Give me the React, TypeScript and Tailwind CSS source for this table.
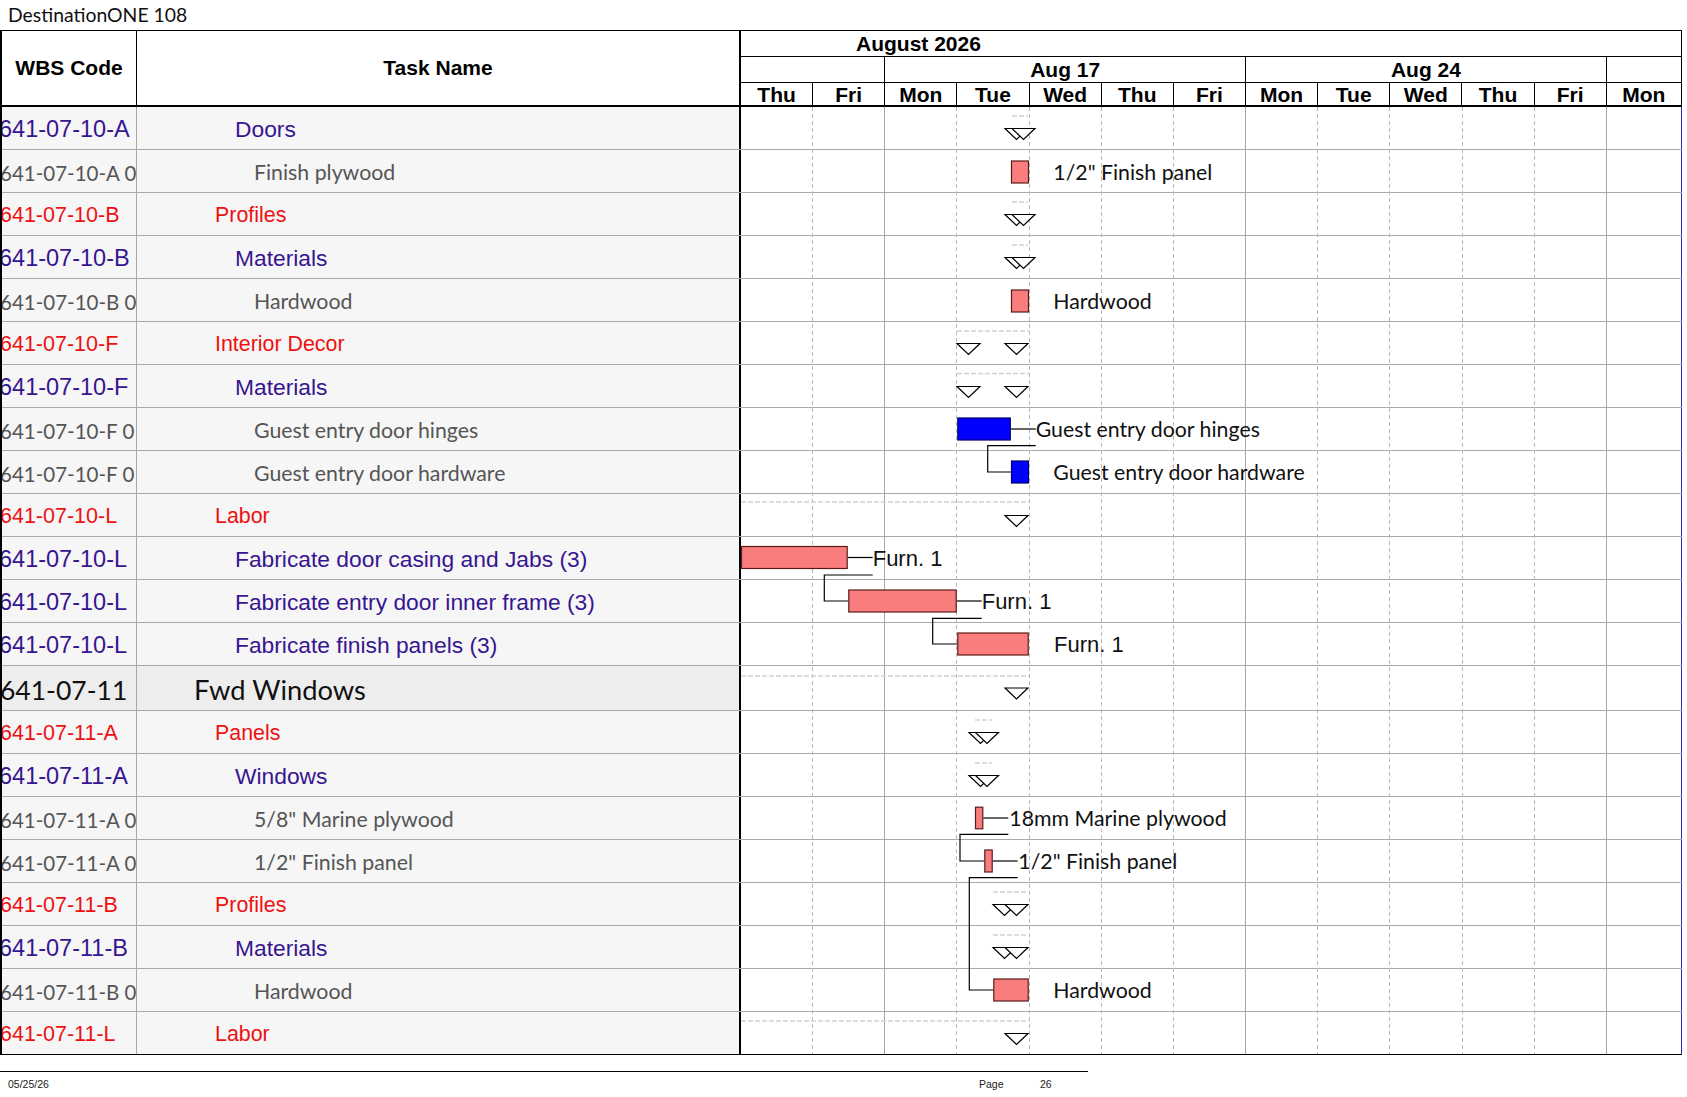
import React from 'react'

type Kind = 'purple' | 'gray' | 'red' | 'top'

const rows: [string, string, Kind][] = [
  ['641-07-10-A', 'Doors', 'purple'],
  ['641-07-10-A 0', 'Finish plywood', 'gray'],
  ['641-07-10-B', 'Profiles', 'red'],
  ['641-07-10-B', 'Materials', 'purple'],
  ['641-07-10-B 0', 'Hardwood', 'gray'],
  ['641-07-10-F', 'Interior Decor', 'red'],
  ['641-07-10-F', 'Materials', 'purple'],
  ['641-07-10-F 0', 'Guest entry door hinges', 'gray'],
  ['641-07-10-F 0', 'Guest entry door hardware', 'gray'],
  ['641-07-10-L', 'Labor', 'red'],
  ['641-07-10-L', 'Fabricate door casing and Jabs (3)', 'purple'],
  ['641-07-10-L', 'Fabricate entry door inner frame (3)', 'purple'],
  ['641-07-10-L', 'Fabricate finish panels (3)', 'purple'],
  ['641-07-11', 'Fwd Windows', 'top'],
  ['641-07-11-A', 'Panels', 'red'],
  ['641-07-11-A', 'Windows', 'purple'],
  ['641-07-11-A 0', '5/8" Marine plywood', 'gray'],
  ['641-07-11-A 0', '1/2" Finish panel', 'gray'],
  ['641-07-11-B', 'Profiles', 'red'],
  ['641-07-11-B', 'Materials', 'purple'],
  ['641-07-11-B 0', 'Hardwood', 'gray'],
  ['641-07-11-L', 'Labor', 'red'],
]

const days = ['Thu', 'Fri', 'Mon', 'Tue', 'Wed', 'Thu', 'Fri', 'Mon', 'Tue', 'Wed', 'Thu', 'Fri', 'Mon']

const ARIAL = "font-['Liberation_Sans',Arial,sans-serif]"
const CALIBRI = "font-['Lato','Liberation_Sans',sans-serif]"

const wbsClass: Record<Kind, string> = {
  purple: `${ARIAL} text-[23.5px] text-[#371590] -ml-[3px] translate-y-[2px]`,
  red: `${ARIAL} text-[21.5px] text-[#ee1111] -ml-[2px] translate-y-[2px]`,
  gray: `${CALIBRI} text-[20.5px] text-[#555555] -ml-[2px] translate-y-[2px]`,
  top: `${CALIBRI} text-[26.5px] text-[#111111] -ml-[2px] translate-y-[2px]`,
}

const taskClass: Record<Kind, string> = {
  purple: `${ARIAL} text-[22.8px] text-[#371590] pl-[98px] translate-y-[0.5px]`,
  red: `${ARIAL} text-[21.4px] text-[#ee1111] pl-[78px] translate-y-[2px]`,
  gray: `${CALIBRI} text-[21.3px] text-[#555555] pl-[117px] translate-y-[2px]`,
  top: `${CALIBRI} text-[27.3px] text-[#111111] pl-[57px] translate-y-[2px]`,
}

const D = 72.15
const rowTop = (r: number) => (r <= 13 ? 107 + 43 * r : 711 + 43 * (r - 14))

// summary dashes: [x1, x2, y]
const dashes: [number, number, number][] = [
  [1012, 1028, 116],
  [1012, 1028, 202],
  [1012, 1028, 245],
  [957, 1029, 331],
  [957, 1029, 373.5],
  [741, 1029, 502],
  [741, 1029, 676],
  [975, 992, 720],
  [975, 992, 763],
  [993, 1028, 892],
  [993, 1028, 935],
  [741, 1029, 1021],
]

// milestone triangles: [left, top]
const tris: [number, number][] = [
  [1005, rowTop(0) + 21.5], [1012, rowTop(0) + 21.5],
  [1005, rowTop(2) + 21.5], [1012, rowTop(2) + 21.5],
  [1005, rowTop(3) + 21.5], [1012, rowTop(3) + 21.5],
  [957, rowTop(5) + 21.5], [1005, rowTop(5) + 21.5],
  [957, rowTop(6) + 21.5], [1005, rowTop(6) + 21.5],
  [1005, rowTop(9) + 21.5],
  [1005, rowTop(13) + 22],
  [969, rowTop(14) + 21.5], [975.5, rowTop(14) + 21.5],
  [969, rowTop(15) + 21.5], [975.5, rowTop(15) + 21.5],
  [993, rowTop(18) + 21.5], [1005, rowTop(18) + 21.5],
  [993, rowTop(19) + 21.5], [1005, rowTop(19) + 21.5],
  [1005, rowTop(21) + 21.5],
]

// bars: [x, y, w, h, blue]
const bars: [number, number, number, number, boolean][] = [
  [1011, 160.5, 18, 23, false],
  [1011, 289.5, 18, 23, false],
  [957.3, 417.5, 53.5, 23, true],
  [1011, 460.5, 18, 23, true],
  [741, 546, 106.7, 23, false],
  [848.3, 589.5, 108.4, 23, false],
  [957.3, 632.5, 71.4, 23, false],
  [975, 806.7, 8.3, 22.6, false],
  [984.3, 849.5, 8.4, 23, false],
  [993.3, 978.5, 35.4, 23, false],
]

const links: number[][][] = [
  [[1011, 429], [1035.7, 429]],
  [[1035.7, 445.7], [987.7, 445.7], [987.7, 472], [1011, 472]],
  [[847.7, 557.5], [872.7, 557.5]],
  [[872.7, 575], [824.3, 575], [824.3, 601], [848.3, 601]],
  [[956.7, 601], [981.7, 601]],
  [[981.7, 618.3], [932.7, 618.3], [932.7, 644], [957.3, 644]],
  [[983.3, 818], [1008.3, 818]],
  [[1008.3, 834.3], [960, 834.3], [960, 861], [984.3, 861]],
  [[992.7, 861], [1017.7, 861]],
  [[1017.7, 877.7], [969.3, 877.7], [969.3, 990], [993.3, 990]],
]

// labels: [x, centerY, text, arial]
const labels: [number, number, string, boolean][] = [
  [1053.3, 172, '1/2" Finish panel', false],
  [1053.3, 301, 'Hardwood', false],
  [1035.7, 429, 'Guest entry door hinges', false],
  [1053.3, 472, 'Guest entry door hardware', false],
  [872.7, 557.5, 'Furn. 1', true],
  [981.7, 601, 'Furn. 1', true],
  [1054, 644, 'Furn. 1', true],
  [1009.3, 818, '18mm Marine plywood', false],
  [1018.3, 861, '1/2" Finish panel', false],
  [1053.3, 990, 'Hardwood', false],
]

function ChartOverlay() {
  // the body sits inside the table's 2px left border, so 739 here is x=741 on the page
  return (
    <div className="pointer-events-none absolute left-[739px] top-0 h-[948px] w-[940px]">
      <svg width={940} height={948} viewBox="741 107 940 948" className="absolute left-0 top-0">
        {Array.from({ length: 12 }, (_, i) => {
          const x = Math.round(741 + (i + 1) * D) - 0.5
          const solid = i === 1 || i === 6 || i === 11
          return (
            <line
              key={i}
              x1={x}
              x2={x}
              y1={107}
              y2={1054}
              stroke={solid ? '#a8a8a8' : '#b8b8b8'}
              strokeWidth={1}
              strokeDasharray={solid ? undefined : '4 3'}
              shapeRendering="crispEdges"
            />
          )
        })}
        {dashes.map(([a, b, y], i) => (
          <line
            key={i}
            x1={a}
            x2={b}
            y1={y}
            y2={y}
            stroke="#d2d2d2"
            strokeWidth={1.5}
            strokeDasharray="5 2"
          />
        ))}
        {tris.map(([l, t], i) => (
          <polygon
            key={i}
            points={`${l},${t} ${l + 23},${t} ${l + 11.5},${t + 11}`}
            fill="white"
            stroke="black"
            strokeWidth={1.2}
          />
        ))}
        {links.map((pts, i) => (
          <polyline
            key={i}
            points={pts.map((p) => p.join(',')).join(' ')}
            fill="none"
            stroke="black"
            strokeWidth={1.2}
          />
        ))}
        {bars.map(([x, y, w, h, blue], i) => (
          <rect
            key={i}
            x={x + 0.5}
            y={y + 0.5}
            width={w - 1}
            height={h - 1}
            fill={blue ? '#0000ff' : '#fa7d7d'}
            stroke={blue ? '#00006e' : '#5a1a1a'}
            strokeWidth={1.2}
          />
        ))}
      </svg>
      {labels.map(([x, y, text, arial], i) => (
        <span
          key={i}
          className={`absolute -translate-y-1/2 whitespace-nowrap leading-none text-[#111111] ${
            arial ? `${ARIAL} text-[22px]` : `${CALIBRI} text-[21.3px]`
          }`}
          style={{ left: x - 741, top: y - 106 }}
        >
          {text}
        </span>
      ))}
    </div>
  )
}

export default function App() {
  return (
    <div className={`relative h-[1097px] w-[1687px] overflow-hidden bg-white ${ARIAL}`}>
      <div className={`flex h-[30px] items-center pl-[8px] text-[19.4px] text-[#111111] ${CALIBRI}`}>
        DestinationONE 108
      </div>

      <div className="w-[1682px] border-l-2 border-black">
        {/* header */}
        <div className="flex h-[77px] border-b-2 border-t border-black text-[21px] font-bold text-black">
          <div className="flex w-[135px] items-center justify-center border-r border-black">WBS Code</div>
          <div className="flex w-[604px] items-center justify-center border-r-2 border-black">Task Name</div>
          <div className="flex w-[941px] flex-col border-r border-black">
            <div className="flex h-[26px] items-center border-b border-black pl-[115px] leading-none">
              August 2026
            </div>
            <div className="grid h-[26px] grid-cols-[144.3px_360.75px_360.75px_1fr] border-b border-black leading-none">
              <div className="border-r border-black" />
              <div className="flex items-center justify-center border-r border-black">Aug 17</div>
              <div className="flex items-center justify-center border-r border-black">Aug 24</div>
              <div />
            </div>
            <div className="grid h-[22px] grid-cols-[repeat(12,72.15px)_1fr] leading-none">
              {days.map((d, i) => (
                <div
                  key={i}
                  className={`flex items-center justify-center ${i < 12 ? 'border-r border-black' : ''}`}
                >
                  {d}
                </div>
              ))}
            </div>
          </div>
        </div>

        {/* body */}
        <div className="relative">
          {rows.map(([code, name, kind], i) => {
            const last = i === rows.length - 1
            const bg = kind === 'top' ? 'bg-[#ededed]' : 'bg-[#f6f6f6]'
            return (
              <div
                key={i}
                className={`flex ${kind === 'top' ? 'h-[45px]' : 'h-[43px]'} border-b ${
                  last ? 'border-black' : 'border-[#a9a9a9]'
                }`}
              >
                <div
                  className={`flex w-[135px] items-center overflow-hidden whitespace-nowrap border-r border-[#a9a9a9] ${bg}`}
                >
                  <span className={`leading-none ${wbsClass[kind]}`}>{code}</span>
                </div>
                <div className={`flex w-[604px] items-center whitespace-nowrap border-r-2 border-black ${bg}`}>
                  <span className={`leading-none ${taskClass[kind]}`}>{name}</span>
                </div>
                <div className="w-[941px] border-r border-[#2a2ab4] bg-white" />
              </div>
            )
          })}
          <ChartOverlay />
        </div>
      </div>

      {/* footer */}
      <div className="mt-[16px] w-[1088px] border-t border-black">
        <div className="flex items-center pt-[6px] text-[10.5px] leading-[12px] text-[#222222]">
          <span className="w-[979px] pl-[8px]">05/25/26</span>
          <span className="w-[61px]">Page</span>
          <span>26</span>
        </div>
      </div>
    </div>
  )
}
